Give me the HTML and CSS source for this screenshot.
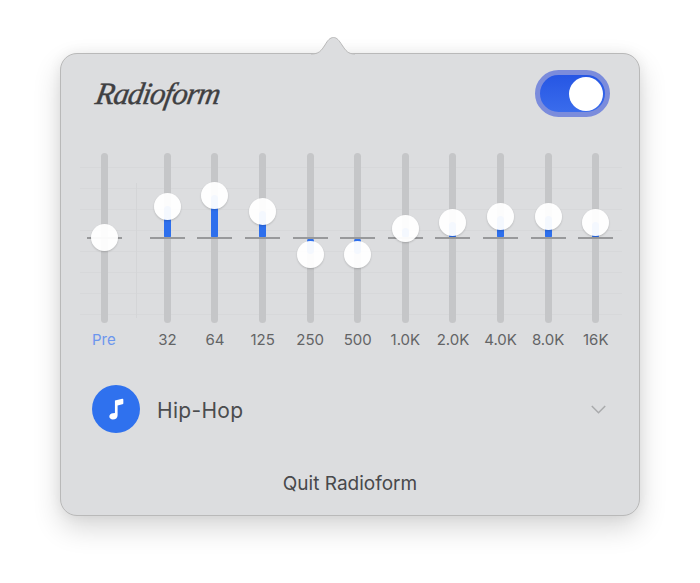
FILE: index.html
```html
<!DOCTYPE html>
<html lang="en">
<head>
    <meta charset="UTF-8">
    <title>Radioform</title>
    <link rel="stylesheet" href="styles.css">
</head>
<body>
    <div class="panel">
        <svg class="arrow" width="44" height="18" viewBox="0 0 44 18">
            <path class="arrow-fill" d="M0 17 C8 17 10 14 14 8 C16.5 3.5 19 0.5 22.5 0.5 C26 0.5 28 3.5 31 8 C35 14 37 17 44 17 L44 18 L0 18 Z"/>
            <path class="arrow-line" d="M0 17 C8 17 10 14 14 8 C16.5 3.5 19 0.5 22.5 0.5 C26 0.5 28 3.5 31 8 C35 14 37 17 44 17"/>
        </svg>

        <div class="header">
            <div class="logo">Radioform</div>
            <div class="toggle"><div class="toggle-knob"></div></div>
        </div>

        <div class="eq">
            <div class="band pre">
                <div class="slider">
                    <div class="zero"></div>
                    <div class="knob" style="top: 71px"></div>
                </div>
                <div class="band-label">Pre</div>
            </div>
            <div class="bands">
                <div class="band">
                    <div class="slider">
                        <div class="fill" style="top: 53px; height: 33px"></div>
                        <div class="zero"></div>
                        <div class="knob" style="top: 40px"></div>
                    </div>
                    <div class="band-label">32</div>
                </div>
                <div class="band">
                    <div class="slider">
                        <div class="fill" style="top: 42px; height: 44px"></div>
                        <div class="zero"></div>
                        <div class="knob" style="top: 29px"></div>
                    </div>
                    <div class="band-label">64</div>
                </div>
                <div class="band">
                    <div class="slider">
                        <div class="fill" style="top: 58px; height: 28px"></div>
                        <div class="zero"></div>
                        <div class="knob" style="top: 45px"></div>
                    </div>
                    <div class="band-label">125</div>
                </div>
                <div class="band">
                    <div class="slider">
                        <div class="fill" style="top: 85px; height: 16px"></div>
                        <div class="zero"></div>
                        <div class="knob" style="top: 88px"></div>
                    </div>
                    <div class="band-label">250</div>
                </div>
                <div class="band">
                    <div class="slider">
                        <div class="fill" style="top: 85px; height: 16px"></div>
                        <div class="zero"></div>
                        <div class="knob" style="top: 88px"></div>
                    </div>
                    <div class="band-label">500</div>
                </div>
                <div class="band">
                    <div class="slider">
                        <div class="fill" style="top: 75px; height: 10px"></div>
                        <div class="zero"></div>
                        <div class="knob" style="top: 62px"></div>
                    </div>
                    <div class="band-label">1.0K</div>
                </div>
                <div class="band">
                    <div class="slider">
                        <div class="fill" style="top: 69px; height: 17px"></div>
                        <div class="zero"></div>
                        <div class="knob" style="top: 56px"></div>
                    </div>
                    <div class="band-label">2.0K</div>
                </div>
                <div class="band">
                    <div class="slider">
                        <div class="fill" style="top: 63px; height: 23px"></div>
                        <div class="zero"></div>
                        <div class="knob" style="top: 50px"></div>
                    </div>
                    <div class="band-label">4.0K</div>
                </div>
                <div class="band">
                    <div class="slider">
                        <div class="fill" style="top: 63px; height: 23px"></div>
                        <div class="zero"></div>
                        <div class="knob" style="top: 50px"></div>
                    </div>
                    <div class="band-label">8.0K</div>
                </div>
                <div class="band">
                    <div class="slider">
                        <div class="fill" style="top: 69px; height: 17px"></div>
                        <div class="zero"></div>
                        <div class="knob" style="top: 56px"></div>
                    </div>
                    <div class="band-label">16K</div>
                </div>
            </div>
        </div>

        <div class="preset">
            <div class="preset-icon">
                <svg width="32" height="32" viewBox="0 0 24 24">
                    <path d="M11.2 5.6 L16.6 4.3 C17.2 4.2 17.5 4.5 17.5 5 L17.5 7.6 C17.5 8.1 17.3 8.4 16.8 8.5 L13.2 9.4 L13.2 16.6 C13.2 18.6 11.7 19.9 9.6 19.9 C8.1 19.9 7 19 7 17.7 C7 16.2 8.2 15.4 9.7 15.2 L11.2 15 Z"/>
                </svg>
            </div>
            <div class="preset-name">Hip-Hop</div>
            <svg class="chevron" width="15" height="9" viewBox="0 0 15 9">
                <path d="M0.8 1 L7.5 7.8 L14.2 1"/>
            </svg>
        </div>

        <div class="quit">Quit Radioform</div>
    </div>
</body>
</html>
```

FILE: styles.css
```css
* {
    margin: 0;
    padding: 0;
    box-sizing: border-box;
    font-family: Inter, "Noto Sans", sans-serif;
}

body {
    background: #fff;
    padding: 53px 0 0 60px;
    overflow: hidden;
    height: 583px;
}

.panel {
    position: relative;
    width: 580px;
    height: 463px;
    background: #dcdddf;
    border: 1px solid #b9b9b9;
    border-radius: 17px;
    box-shadow: 0 12px 28px rgba(0,0,0,0.16), 0 0 14px rgba(0,0,0,0.06);
}

.arrow {
    position: absolute;
    top: -17px;
    left: 250px;
}

.arrow-fill {
    fill: #dcdddf;
}

.arrow-line {
    fill: none;
    stroke: #b9b9b9;
    stroke-width: 1;
}

.header {
    display: flex;
    align-items: center;
    justify-content: space-between;
    padding: 16px 29px 0 35px;
}

.logo {
    font-family: "Liberation Serif", serif;
    font-style: italic;
    font-size: 31px;
    letter-spacing: -1px;
    color: #3f4042;
    -webkit-text-stroke: 0.4px #3f4042;
    transform: skewX(-10deg);
}

.toggle {
    display: flex;
    justify-content: flex-end;
    align-items: center;
    width: 75px;
    height: 47px;
    padding-right: 2px;
    border-radius: 24px;
    border: 5px solid #7b8cdc;
    background: linear-gradient(to bottom, #2656e4, #3a6cec);
}

.toggle-knob {
    width: 34px;
    height: 34px;
    border-radius: 50%;
    background: #fff;
}

.eq {
    position: relative;
    display: flex;
    gap: 15px;
    margin: 36px 17px 0 20px;
}

/* faint grid behind the sliders */
.eq::before {
    content: "";
    position: absolute;
    top: 14px;
    left: -1px;
    right: 0;
    height: 150px;
    background: repeating-linear-gradient(to bottom, #d7d8da 0, #d7d8da 1px, transparent 1px, transparent 21px);
}

.eq::after {
    content: "";
    position: absolute;
    top: 30px;
    left: 55px;
    width: 1px;
    height: 135px;
    background: #d4d5d7;
}

.bands {
    display: flex;
}

.band {
    position: relative;
    width: 47.6px;
    display: flex;
    flex-direction: column;
    align-items: center;
}

.slider {
    position: relative;
    width: 7px;
    height: 170px;
    border-radius: 4px;
    background: #c5c6c8;
}

.fill {
    position: absolute;
    left: 0;
    width: 7px;
    border-radius: 4px;
    background: #2d6fed;
}

.zero {
    position: absolute;
    top: 84px;
    left: -14px;
    width: 35px;
    height: 1.5px;
    background: #98999b;
}

.knob {
    position: absolute;
    left: -10px;
    width: 27px;
    height: 27px;
    border-radius: 50%;
    background: rgba(255,255,255,0.95);
    box-shadow: 0 1px 2px rgba(0,0,0,0.18);
    z-index: 1;
}

.band-label {
    margin-top: 8px;
    font-size: 15px;
    line-height: 18px;
    white-space: nowrap;
    color: #636466;
}

.pre .band-label {
    margin-right: 2px;
    color: #6c96ee;
}

.preset {
    display: flex;
    align-items: center;
    margin: 36px 33px 0 31px;
}

.preset-icon {
    display: flex;
    align-items: center;
    justify-content: center;
    width: 48px;
    height: 48px;
    border-radius: 50%;
    background: #2f71ee;
}

.preset-icon svg {
    fill: #fff;
}

.preset-name {
    flex: 1;
    margin-left: 17px;
    padding-top: 2px;
    font-size: 21px;
    letter-spacing: 0.3px;
    color: #4b4c4e;
}

.chevron {
    fill: none;
    stroke: #a9aaac;
    stroke-width: 1.5;
}

.quit {
    margin-top: 40px;
    text-align: center;
    font-size: 19px;
    line-height: 22px;
    color: #48494b;
}
```
